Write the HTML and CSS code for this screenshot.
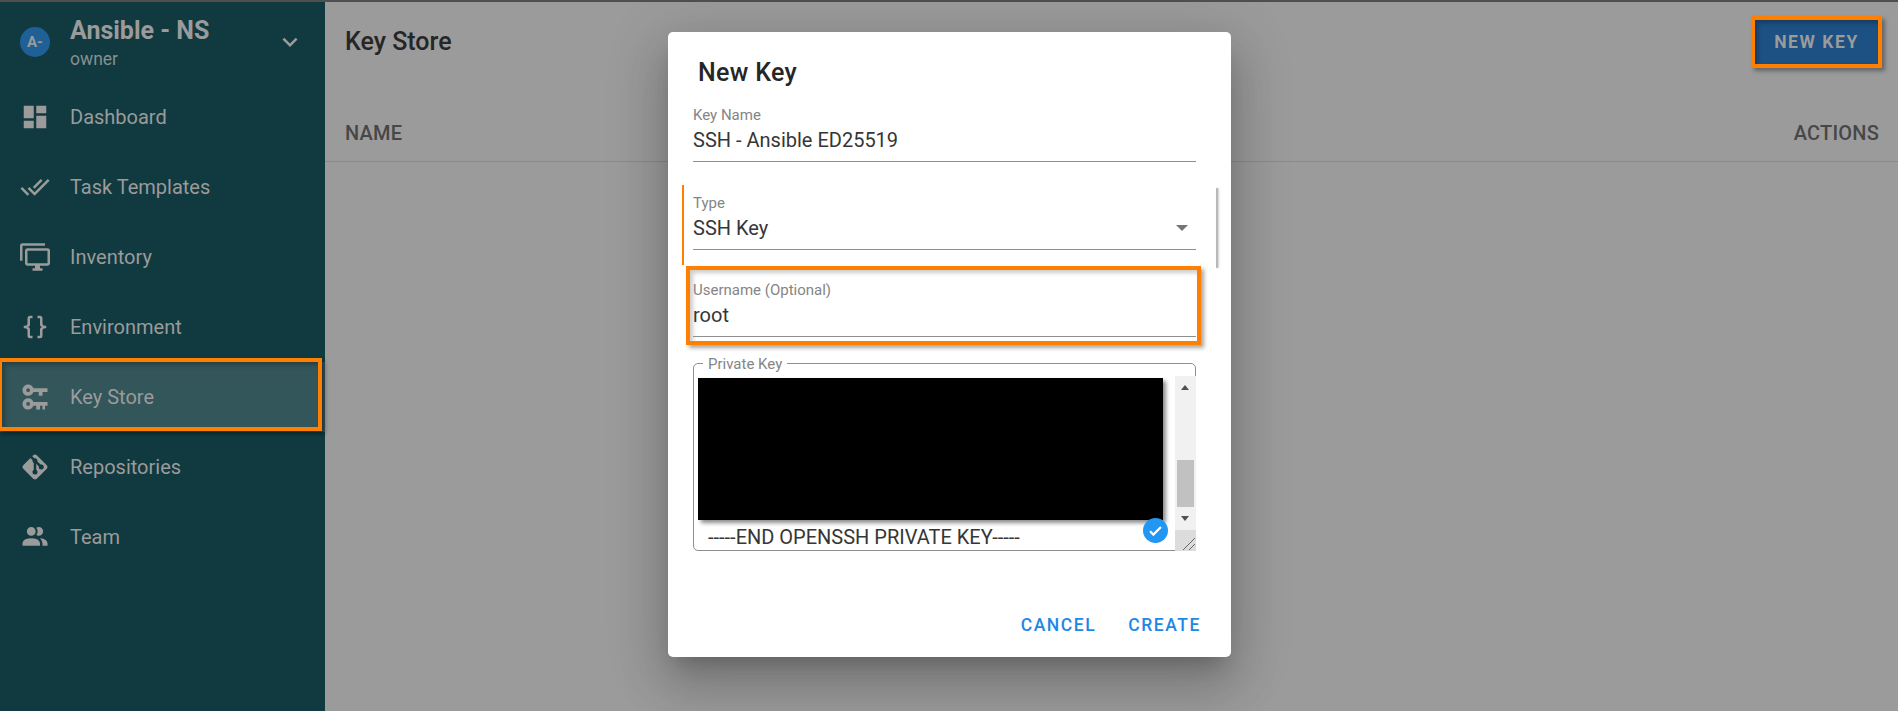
FILE: index.html
```html
<!DOCTYPE html>
<html lang="en">
<head>
<meta charset="utf-8">
<title>Key Store</title>
<link rel="stylesheet" href="styles.css">
</head>
<body>
<div class="topbar"></div>
<div class="app">
  <aside class="sidebar">
    <div class="project">
      <div class="avatar">A-</div>
      <div class="project-text">
        <div class="project-name">Ansible - NS</div>
        <div class="project-role">owner</div>
      </div>
      <svg class="chevron" viewBox="0 0 24 24"><path d="M7.41,8.58L12,13.17L16.59,8.58L18,10L12,16L6,10L7.41,8.58Z"/></svg>
    </div>
    <nav class="nav">
      <a class="nav-item"><svg class="nav-icon" viewBox="0 0 24 24"><path d="M13,3V9H21V3M13,21H21V11H13M3,21H11V15H3M3,13H11V3H3V13Z"/></svg><span>Dashboard</span></a>
      <a class="nav-item"><svg class="nav-icon" viewBox="0 0 24 24"><path d="M0.41,13.41L6,19L7.41,17.58L1.83,12M22.24,5.58L11.66,16.17L7.5,12L6.07,13.41L11.66,19L23.66,7M18,7L16.59,5.58L10.24,11.93L11.66,13.34L18,7Z"/></svg><span>Task Templates</span></a>
      <a class="nav-item"><svg class="nav-icon" viewBox="0 0 24 24"><path d="M22,17V7H6V17H22M22,5A2,2 0 0,1 24,7V17C24,18.11 23.1,19 22,19H16V21H18V23H10V21H12V19H6C4.89,19 4,18.11 4,17V7A2,2 0 0,1 6,5H22M2,3V15H0V3A2,2 0 0,1 2,1H20V3H2Z"/></svg><span>Inventory</span></a>
      <a class="nav-item"><svg class="nav-icon" viewBox="0 0 24 24"><path d="M8,3A2,2 0 0,0 6,5V9A2,2 0 0,1 4,11H3V13H4A2,2 0 0,1 6,15V19A2,2 0 0,0 8,21H10V19H8V14A2,2 0 0,0 6,12A2,2 0 0,0 8,10V5H10V3M16,3A2,2 0 0,1 18,5V9A2,2 0 0,0 20,11H21V13H20A2,2 0 0,0 18,15V19A2,2 0 0,1 16,21H14V19H16V14A2,2 0 0,1 18,12A2,2 0 0,1 16,10V5H14V3H16Z"/></svg><span>Environment</span></a>
      <a class="nav-item nav-item-active"><svg class="nav-icon" viewBox="0 0 24 24"><path d="M6.5,2C8.46,2 10.13,3.25 10.74,5H22V8H18V11H15V8H10.74C10.13,9.75 8.46,11 6.5,11C4,11 2,9 2,6.5C2,4 4,2 6.5,2M6.5,5A1.5,1.5 0 0,0 5,6.5A1.5,1.5 0 0,0 6.5,8A1.5,1.5 0 0,0 8,6.5A1.5,1.5 0 0,0 6.5,5M6.5,13C8.46,13 10.13,14.25 10.74,16H22V19H20V22H18V19H16V22H13V19H10.74C10.13,20.75 8.46,22 6.5,22C4,22 2,20 2,17.5C2,15 4,13 6.5,13M6.5,16A1.5,1.5 0 0,0 5,17.5A1.5,1.5 0 0,0 6.5,19A1.5,1.5 0 0,0 8,17.5A1.5,1.5 0 0,0 6.5,16Z"/></svg><span>Key Store</span></a>
      <a class="nav-item"><svg class="nav-icon" viewBox="0 0 24 24"><path d="M2.6,10.59L8.38,4.8L10.07,6.5C9.83,7.35 10.22,8.28 11,8.73V14.27C10.4,14.61 10,15.26 10,16A2,2 0 0,0 12,18A2,2 0 0,0 14,16C14,15.26 13.6,14.61 13,14.27V9.41L15.07,11.5C15,11.65 15,11.82 15,12A2,2 0 0,0 17,14A2,2 0 0,0 19,12A2,2 0 0,0 17,10C16.82,10 16.65,10 16.5,10.07L13.93,7.5C14.19,6.57 13.71,5.55 12.78,5.16C12.35,5 11.9,4.96 11.5,5.07L9.8,3.38L10.59,2.6C11.37,1.81 12.63,1.81 13.41,2.6L21.4,10.59C22.19,11.37 22.19,12.63 21.4,13.41L13.41,21.4C12.63,22.19 11.37,22.19 10.59,21.4L2.6,13.41C1.81,12.63 1.81,11.37 2.6,10.59Z"/></svg><span>Repositories</span></a>
      <a class="nav-item"><svg class="nav-icon" viewBox="0 0 24 24"><path d="M16 17V19H2V17S2 13 9 13 16 17 16 17M12.5 7.5A3.5 3.5 0 1 0 9 11A3.5 3.5 0 0 0 12.5 7.5M15.94 13A5.32 5.32 0 0 1 18 17V19H22V17S22 13.37 15.94 13M15 4A3.39 3.39 0 0 0 13.07 4.59A5 5 0 0 1 13.07 10.41A3.39 3.39 0 0 0 15 11A3.5 3.5 0 0 0 15 4Z"/></svg><span>Team</span></a>
    </nav>
  </aside>
  <main class="main">
    <header class="main-header">
      <h1 class="page-title">Key Store</h1>
      <button class="new-key">NEW KEY</button>
    </header>
    <div class="table-head">
      <span>NAME</span>
      <span>ACTIONS</span>
    </div>
  </main>
</div>

<section class="dialog">
  <h2 class="dialog-title">New Key</h2>
  <div class="field field-name">
    <div class="field-label">Key Name</div>
    <div class="field-value">SSH - Ansible ED25519</div>
  </div>
  <div class="type-row">
    <div class="field">
      <div class="field-label">Type</div>
      <div class="field-value select-value">SSH Key<span class="select-caret"></span></div>
    </div>
  </div>
  <div class="user-box">
    <div class="field">
      <div class="field-label">Username (Optional)</div>
      <div class="field-value">root</div>
    </div>
  </div>
  <div class="key-box">
    <span class="key-legend">Private Key</span>
    <div class="key-text">-----END OPENSSH PRIVATE KEY-----</div>
    <div class="key-scroll">
      <div class="scroll-track">
        <span class="arrow arrow-up"></span>
        <span class="scroll-thumb"></span>
        <span class="arrow arrow-down"></span>
      </div>
      <div class="scroll-resizer">
        <svg viewBox="0 0 21 21" class="resizer-icon"><path d="M8 20L20 8M14 20L20 14"/></svg>
      </div>
    </div>
    <div class="redaction"></div>
    <div class="check-badge">
      <svg viewBox="0 0 24 24"><path d="M9 15.6L5.4 12L3.2 14.2L9 20L20.8 8.2L18.6 6Z"/></svg>
    </div>
  </div>
  <div class="dialog-actions">
    <button class="text-btn">CANCEL</button>
    <button class="text-btn">CREATE</button>
  </div>
</section>
</body>
</html>
```
FILE: styles.css
```css
* { box-sizing: border-box; }
html, body { margin: 0; padding: 0; height: 711px; overflow: hidden; }
body { font-family: Roboto, "Liberation Sans", sans-serif; background: #9b9b9b; color: #262626; position: relative; }

.topbar { height: 2px; background: #4f4f4f; }
.app { display: flex; height: 709px; }

/* sidebar */
.sidebar { width: 325px; flex: none; background: #103a40; color: #9b9b9b; }
.project { height: 80px; display: flex; align-items: flex-start; padding-left: 20px; }
.avatar { width: 30px; height: 30px; margin-top: 25px; border-radius: 50%; background: #1f6096; color: #9b9b9b; font-size: 15px; font-weight: 700; line-height: 30px; text-align: center; flex: none; }
.project-text { margin-left: 20px; padding-top: 14px; width: 205px; }
.project-name { font-size: 25px; font-weight: 700; line-height: 30px; }
.project-role { font-size: 17.5px; line-height: 24px; margin-top: 1px; color: #878f90; }
.chevron { width: 30px; height: 30px; fill: #9b9b9b; margin-top: 25px; flex: none; }
.nav-item { height: 70px; display: flex; align-items: center; padding-left: 20px; gap: 20px; font-size: 20px; position: relative; }
.nav-icon { width: 30px; height: 30px; fill: #9b9b9b; flex: none; }
.nav-item-active { background: #33565a; }
.nav-item-active::after { content: ""; position: absolute; left: -2px; right: 3px; top: -4px; bottom: 1px; border: 4px solid #ff8000; box-shadow: 3px 3px 4px rgba(0,0,0,.35), inset 3px 3px 4px rgba(0,0,0,.25); }

/* main */
.main { flex: 1; min-width: 0; }
.main-header { height: 80px; display: flex; align-items: center; justify-content: space-between; padding: 0 16px 0 20px; }
.page-title { margin: 0; font-size: 25px; font-weight: 500; line-height: 32px; color: #262626; }
.new-key { width: 131px; height: 52px; border: 4px solid #ff8000; background: #1d5083; color: #9b9b9b; font-family: inherit; font-size: 17.5px; font-weight: 700; letter-spacing: 1.56px; box-shadow: 3px 3px 4px rgba(0,0,0,.35), inset 3px 3px 4px rgba(0,0,0,.25); padding: 0; }
.table-head { height: 80px; display: flex; justify-content: space-between; padding: 39px 19px 0 20px; border-bottom: 1px solid #8a8a8a; font-size: 20px; font-weight: 500; line-height: 24px; color: #474747; letter-spacing: .2px; }

/* dialog */
.dialog { position: absolute; left: 668px; top: 32px; width: 563px; height: 625px; background: #fff; border-radius: 5px; display: flex; flex-direction: column; box-shadow: 0 14px 19px -9px rgba(0,0,0,.2), 0 30px 48px 4px rgba(0,0,0,.14), 0 11px 58px 10px rgba(0,0,0,.12); }
.dialog-title { margin: 25px 0 0 30px; font-size: 25px; font-weight: 500; line-height: 32px; letter-spacing: .31px; color: #262626; }
.field { width: 503px; border-bottom: 1px solid #8f8f8f; padding-bottom: 7px; }
.field-label { font-size: 15px; line-height: 18px; color: #858585; }
.field-value { font-size: 20px; line-height: 28px; margin-top: 2px; color: #363636; position: relative; }
.field-name { margin: 17px 0 0 25px; }

.type-row { margin: 23px 0 0 14px; height: 80px; width: 536px; padding: 9px 0 0 9px; border-left: 2px solid #ff8000; position: relative; }
.type-row::after { content: ""; position: absolute; right: 0; top: 3px; bottom: -3px; width: 2px; background: #b9b9b9; box-shadow: 1px 0 2px rgba(0,0,0,.2); }
.select-caret { position: absolute; right: 8px; top: 11px; border-left: 6px solid transparent; border-right: 6px solid transparent; border-top: 6px solid #757575; }

.user-box { margin: 1px 0 0 18px; width: 515px; height: 79px; border: 4px solid #ff8000; padding: 11px 0 0 3px; box-shadow: 3px 3px 4px rgba(0,0,0,.35), inset 3px 3px 4px rgba(0,0,0,.2); }

.key-box { margin: 18px 0 0 25px; width: 503px; height: 188px; border: 1px solid #8f8f8f; border-radius: 5px; position: relative; }
.key-legend { position: absolute; left: 9px; top: -9px; padding: 0 5px; background: #fff; font-size: 15px; line-height: 18px; color: #858585; }
.key-text { position: absolute; left: 14px; right: 24px; bottom: 0; height: 27px; font-size: 20px; line-height: 28px; color: #363636; overflow: hidden; white-space: nowrap; }
.key-scroll { position: absolute; right: -1px; top: 12px; bottom: -1px; width: 21px; display: flex; flex-direction: column; }
.scroll-track { height: 154px; background: #f1f1f1; position: relative; }
.scroll-thumb { position: absolute; left: 2px; right: 2px; top: 84px; height: 47px; background: #c1c1c1; }
.arrow { position: absolute; left: 6px; border-left: 4.5px solid transparent; border-right: 4.5px solid transparent; }
.arrow-up { top: 9px; border-bottom: 5px solid #505050; }
.arrow-down { top: 140px; border-top: 5px solid #505050; }
.scroll-resizer { height: 21px; background: #dcdcdc; }
.resizer-icon { display: block; width: 21px; height: 21px; fill: none; stroke: #666; stroke-width: 1; }
.redaction { position: absolute; left: 4px; top: 14px; width: 465px; height: 142px; background: #000; box-shadow: 3px 3px 4px rgba(0,0,0,.45); }
.check-badge { position: absolute; left: 449px; top: 154px; width: 25px; height: 25px; border-radius: 50%; background: #2196f3; display: flex; align-items: center; justify-content: center; }
.check-badge svg { width: 17px; height: 17px; fill: #fff; }

.dialog-actions { margin-top: auto; display: flex; justify-content: flex-end; gap: 32px; padding: 0 30px 20px 0; }
.text-btn { border: 0; background: none; padding: 0; font-family: inherit; font-size: 17.5px; font-weight: 500; line-height: 24px; letter-spacing: 1.56px; color: #1e88e5; }
```
